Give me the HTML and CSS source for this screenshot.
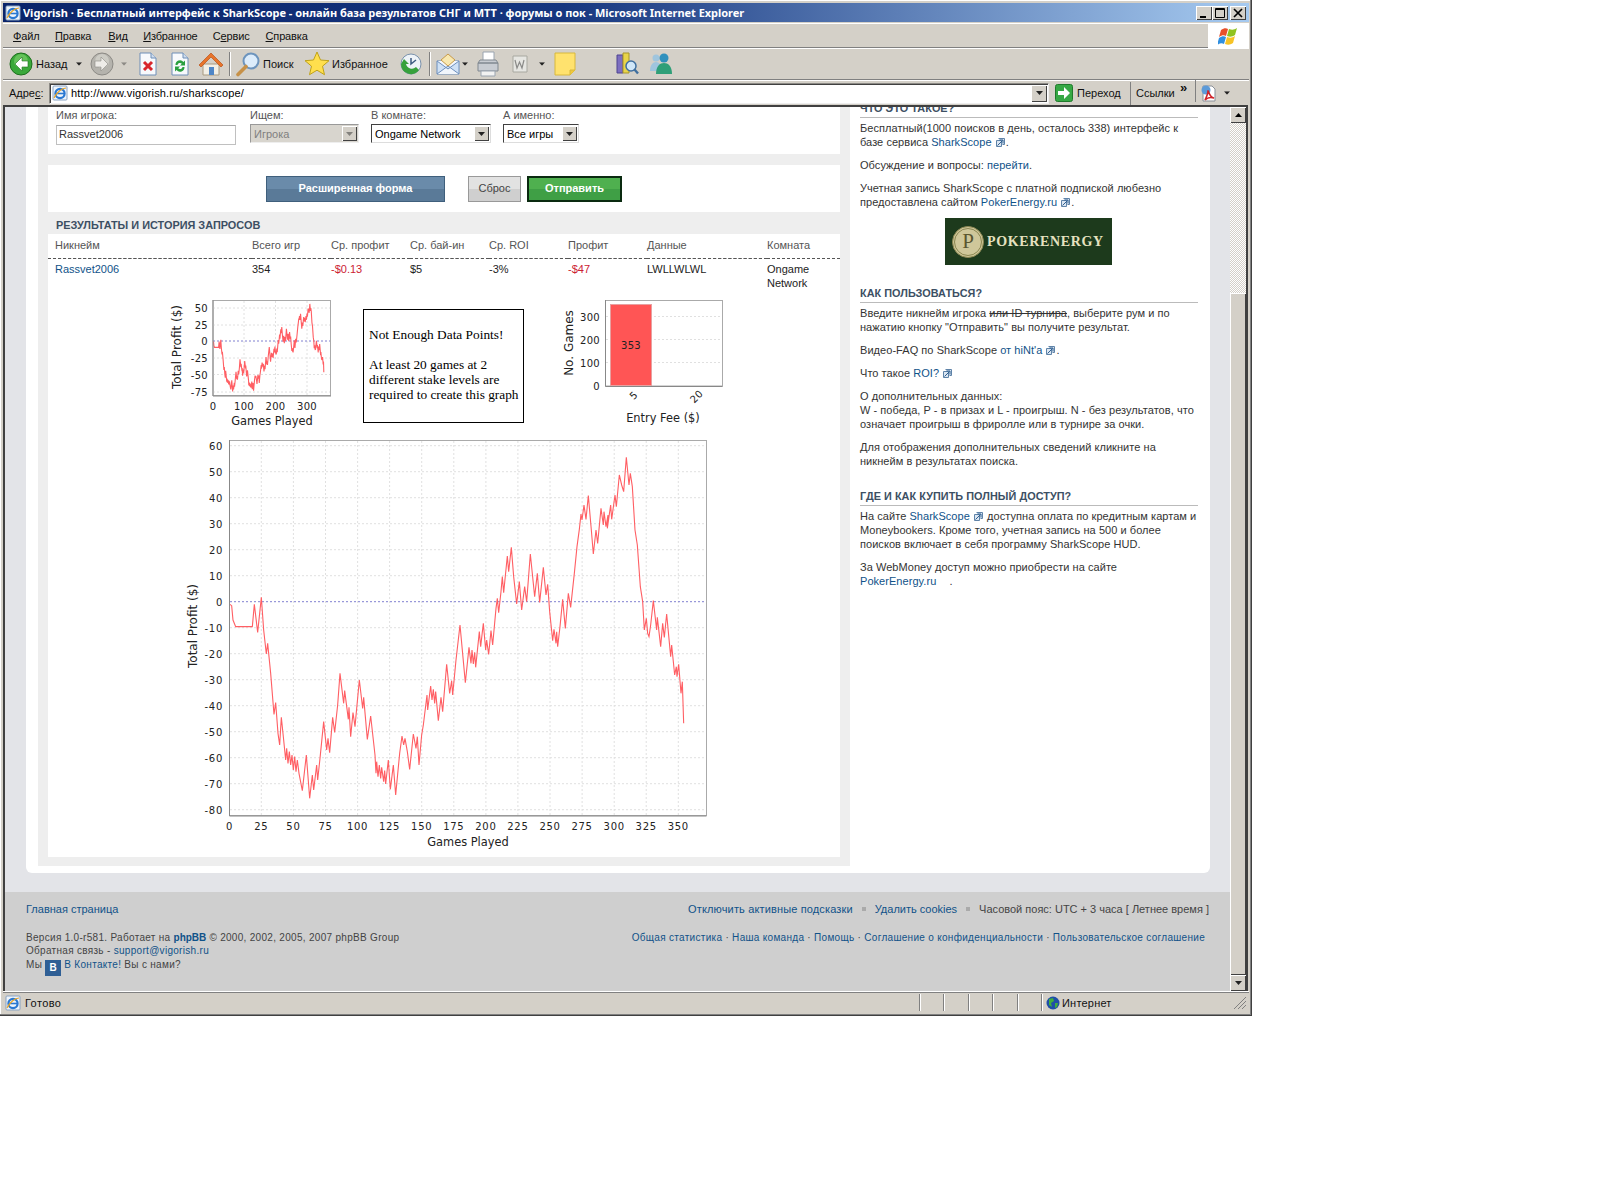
FILE: index.html
```html
<!DOCTYPE html>
<html lang="ru">
<head>
<meta charset="utf-8">
<title>Vigorish</title>
<link rel="stylesheet" href="styles.css">
</head>
<body>
<svg class="defs" width="0" height="0" aria-hidden="true">
  <defs>
    <symbol id="ext" viewBox="0 0 11 11"><path d="M3.5 1.5h6v6h-2M1.5 3.5h5v6h-5z" fill="#dbe6f2" stroke="#5f83a8"/><path d="M2.5 8.5l5-5M4.5 3h3.5v3.5" fill="none" stroke="#2f5f90"/></symbol>
    <symbol id="ie" viewBox="0 0 16 16"><rect x="1" y="1" width="14" height="14" rx="1" fill="#eef4fb" stroke="#8aa3c2"/><circle cx="8" cy="8.5" r="4.6" fill="none" stroke="#2a78d2" stroke-width="2.2"/><path d="M4 8.5h8" stroke="#2a78d2" stroke-width="1.6"/><path d="M2 13C5 7 10 3 14 3" fill="none" stroke="#e8a52b" stroke-width="1.2"/></symbol>
    <symbol id="drop" viewBox="0 0 7 4"><path d="M0 0h7L3.5 4z" fill="#222"/></symbol>
    <polyline id="pl" class="pdata" points="150,523 155,527 159,570 167,590 217,590 223,523 233,607 244,502 251,600 259,672 263,640 272,730 282,853 287,818 294,910 299,945 304,862 311,930 317,990 320,955 324,1000 328,965 332,1005 336,975 340,1020 344,980 348,1025 352,990 357,1030 367,1082 379,975 389,1105 397,1035 401,1080 410,1005 413,1050 420,985 431,875 440,960 444,925 449,968 458,862 464,907 473,825 480,730 491,820 494,782 505,868 507,832 512,920 519,848 525,890 538,750 548,835 551,802 562,928 572,858 585,975 588,1030 590,995 594,1040 598,1005 602,1045 605,1012 611,1055 614,1022 617,1062 625,990 631,1078 640,1005 647,1095 659,970 666,918 671,945 675,925 682,965 689,1018 700,912 708,955 712,920 717,1005 725,915 730,885 741,795 743,840 752,768 756,810 760,778 764,820 767,785 775,872 783,802 788,845 800,703 809,790 815,752 818,795 828,690 840,585 856,758 867,652 873,700 876,660 880,702 884,667 887,712 898,605 902,650 910,580 917,660 920,630 926,673 933,602 938,645 948,535 952,505 956,548 963,485 967,440 971,488 982,378 986,425 994,352 1001,440 1010,522 1018,455 1025,540 1034,470 1040,515 1051,372 1064,500 1072,430 1079,517 1090,412 1098,495 1103,463 1109,545 1118,632 1122,598 1128,640 1130,605 1133,650 1140,590 1148,508 1156,595 1165,490 1172,532 1183,430 1191,350 1198,298 1203,252 1206,270 1212,225 1218,268 1225,197 1234,300 1240,372 1248,300 1253,340 1263,235 1270,285 1272,245 1278,290 1284,255 1282,295 1292,225 1295,268 1305,195 1309,230 1318,135 1325,165 1331,185 1339,82 1347,165 1351,130 1357,170 1365,300 1372,345 1381,470 1388,515 1393,600 1399,565 1403,610 1407,620 1412,585 1420,512 1430,600 1432,562 1442,650 1448,580 1453,622 1460,552 1472,680 1475,645 1484,735 1489,710 1491,740 1496,703 1503,790 1507,755 1511,880"/>
  </defs>
</svg>
<div class="window">
  <header class="titlebar">
    <svg class="ti" viewBox="0 0 16 16"><use href="#ie"/></svg>
    <span class="titletext">Vigorish · Бесплатный интерфейс к SharkScope - онлайн база результатов СНГ и МТТ · форумы о пок - Microsoft Internet Explorer</span>
    <span class="capbtn"><svg viewBox="0 0 14 12"><path d="M3 9h6v2H3z" fill="#000"/></svg></span>
    <span class="capbtn"><svg viewBox="0 0 14 12"><path d="M2.5 1.5h9v9h-9zM2.5 2.5h9" fill="none" stroke="#000"/></svg></span>
    <span class="capbtn close"><svg viewBox="0 0 14 12"><path d="M3 2l8 8M11 2l-8 8" stroke="#000" stroke-width="1.7"/></svg></span>
  </header>
  <nav class="menubar">
    <span class="mi m1"><u>Ф</u>айл</span>
    <span class="mi m2"><u>П</u>равка</span>
    <span class="mi m3"><u>В</u>ид</span>
    <span class="mi m4"><u>И</u>збранное</span>
    <span class="mi m5">С<u>е</u>рвис</span>
    <span class="mi m6"><u>С</u>правка</span>
    <span class="flag"><svg viewBox="0 0 22 22" width="22" height="22"><path d="M3 5c3-2 5-2 7-1l-2 7c-2-1-4-1-7 1z" fill="#e8502a"/><path d="M11 4c3 1 5 1 8-1l-2 7c-3 2-5 2-8 1z" fill="#8fc31f"/><path d="M1 13c3-2 5-2 7-1l-2 7c-2-1-4-1-7 1z" fill="#2f8fe0"/><path d="M9 12c3 1 5 1 8-1l-2 7c-3 2-5 2-8 1z" fill="#f7c325"/></svg></span>
  </nav>
  <div class="toolbar">
    <span class="tb"><svg width="24" height="24" viewBox="0 0 24 24"><circle cx="12" cy="12" r="11" fill="#3aa83a" stroke="#1c6e1c"/><circle cx="12" cy="9" r="7" fill="#8fdc7a" opacity=".5"/><path d="M13 5l-7 7 7 7v-4h6V9h-6z" fill="#fff" stroke="#1c6e1c" stroke-width=".6"/></svg></span>
    <span class="tlabel">Назад</span>
    <span class="tb"><svg class="dd" viewBox="0 0 7 4"><use href="#drop"/></svg></span>
    <span class="tb"><svg width="24" height="24" viewBox="0 0 24 24"><circle cx="12" cy="12" r="11" fill="#b5b3ad" stroke="#8c8a85"/><circle cx="12" cy="9" r="7" fill="#dedcd6" opacity=".6"/><path d="M11 5l7 7-7 7v-4H5V9h6z" fill="#eeece8" stroke="#8c8a85" stroke-width=".6"/></svg></span>
    <span class="tb"><svg class="dd dim" viewBox="0 0 7 4"><use href="#drop"/></svg></span>
    <span class="tb"><svg width="20" height="24" viewBox="0 0 20 24"><path d="M2 1h11l5 5v17H2z" fill="#f7f9fc" stroke="#6f8fb8"/><path d="M13 1v5h5" fill="#cfdcec" stroke="#6f8fb8"/><path d="M6 10l8 8M14 10l-8 8" stroke="#d8262c" stroke-width="3"/></svg></span>
    <span class="tb"><svg width="20" height="24" viewBox="0 0 20 24"><path d="M2 1h11l5 5v17H2z" fill="#f7f9fc" stroke="#6f8fb8"/><path d="M13 1v5h5" fill="#cfdcec" stroke="#6f8fb8"/><path d="M5.500 13a4.500 4.500 0 0 1 8-3l1.500-1.500v5h-5l1.800-1.800a2.500 2.500 0 0 0-4.300 1.300zM14.500 15a4.500 4.500 0 0 1-8 3L5 19.500v-5h5l-1.800 1.800a2.500 2.500 0 0 0 4.300-1.300z" fill="#2aa040"/></svg></span>
    <span class="tb"><svg width="26" height="26" viewBox="0 0 26 26"><path d="M5 13v11h16V13z" fill="#f2efe6" stroke="#a89a80"/><path d="M13 2L1 14l2 2L13 6l10 10 2-2z" fill="#e8742a" stroke="#b8501a" stroke-width=".7"/><rect x="11" y="16" width="5" height="8" fill="#4f86c6"/></svg></span>
    <span class="tsep"></span>
    <span class="tb"><svg width="26" height="26" viewBox="0 0 26 26"><circle cx="16" cy="10" r="7.500" fill="#dcecfb" stroke="#6d94bd" stroke-width="2"/><path d="M11 15.500L3 23.500" stroke="#c79148" stroke-width="3.600" stroke-linecap="round"/></svg></span>
    <span class="tlabel l2">Поиск</span>
    <span class="tb"><svg width="26" height="26" viewBox="0 0 26 26"><path d="M13 1l3.500 8 8.500.7-6.500 5.500 2 8.500-7.500-4.500-7.500 4.500 2-8.500L1 9.700 9.500 9z" fill="#ffdf4d" stroke="#bfa21a"/></svg></span>
    <span class="tlabel l3">Избранное</span>
    <span class="tb"><svg width="26" height="26" viewBox="0 0 26 26"><circle cx="13" cy="13" r="10" fill="#eef3f8" stroke="#7a92ad"/><path d="M3 13a10 10 0 0 0 18 6l-3-3a6 6 0 0 1-10-3H11L6 8z" fill="#37a13c"/><path d="M13 7v6l5-4" fill="none" stroke="#3c5a80" stroke-width="1.500"/></svg></span>
    <span class="tsep"></span>
    <span class="tb"><svg width="24" height="22" viewBox="0 0 24 22"><path d="M1 8h22v13H1z" fill="#cfe1f5" stroke="#6d8fbd"/><path d="M1 21l11-8 11 8M1 8l11 8 11-8" fill="#f1f6fc" stroke="#6d8fbd"/><path d="M5 7l7-6 7 6-7 6z" fill="#f8e8b0" stroke="#c79a4a"/></svg></span>
    <span class="tb"><svg class="dd" viewBox="0 0 7 4"><use href="#drop"/></svg></span>
    <span class="tb"><svg width="24" height="26" viewBox="0 0 24 26"><path d="M7 1h11v11H7z" fill="#fff" stroke="#9aa4b0"/><path d="M2 12h20l-2-3H4zM2 12v8h20v-8z" fill="#c8ccd2" stroke="#808890"/><path d="M5 20h14v5H5z" fill="#f2f2f2" stroke="#9aa4b0"/></svg></span>
    <span class="tb"><svg width="16" height="18" viewBox="0 0 16 18"><path d="M1 1h14v16H1z" fill="#e6e6e2" stroke="#a8a8a0"/><path d="M3 5l2 8 2.500-6 2.500 6 2-8" fill="none" stroke="#8a8a88" stroke-width="1.200"/></svg></span>
    <span class="tb"><svg class="dd" viewBox="0 0 7 4"><use href="#drop"/></svg></span>
    <span class="tb"><svg width="22" height="24" viewBox="0 0 22 24"><path d="M1 1h20v17l-5 5H1z" fill="#ffe26e" stroke="#d8b83c"/><path d="M16 23v-5h5" fill="#f0c83c" stroke="#d8b83c"/></svg></span>
    <span></span>
    <span class="tb"><svg width="24" height="26" viewBox="0 0 24 26"><path d="M2 4h6v18H2z" fill="#7d6fc0" stroke="#4f4590"/><path d="M8 2h6v20H8z" fill="#e8d44a" stroke="#a8962a"/><circle cx="16" cy="15" r="5" fill="#cfe6f8" stroke="#3f6f9f" stroke-width="1.500"/><path d="M19.500 18.500l3.500 4" stroke="#3f6f9f" stroke-width="2.400"/></svg></span>
    <span class="tb"><svg width="26" height="24" viewBox="0 0 26 24"><circle cx="8" cy="6" r="3.500" fill="#9fc5de"/><path d="M2 19c0-6 3-9 6-9s6 3 6 9z" fill="#9fc5de"/><circle cx="16" cy="6" r="4.500" fill="#2f90bd"/><path d="M8 22c0-8 4-11 8-11s8 3 8 11z" fill="#2f9f78"/></svg></span>
  </div>
  <div class="addrbar">
    <span class="addrlabel">Адре<u>с</u>:</span>
    <div class="addrbox">
      <svg class="aico" viewBox="0 0 16 16"><use href="#ie"/></svg>
      <span class="url">http://www.vigorish.ru/sharkscope/</span>
      <span class="arrowbtn"><svg viewBox="0 0 7 4"><use href="#drop"/></svg></span>
    </div>
    <span class="go"><svg width="18" height="18" viewBox="0 0 18 18"><rect x=".5" y=".5" width="17" height="17" rx="2" fill="#36a844" stroke="#1f7a2c"/><path d="M9 3l6 6-6 6v-4H3V7h6z" fill="#fff"/></svg></span>
    <span class="golabel">Переход</span>
    <span class="links">Ссылки</span>
    <span class="chev">»</span>
    <span class="pdf"><svg width="18" height="18" viewBox="0 0 18 18"><path d="M3 2h9l3 3v12H3z" fill="#fff" stroke="#8a9099"/><circle cx="6" cy="6" r="4.500" fill="#5c9ad8"/><path d="M5 16c2-4 3-8 3-9s2 7 6 7c-3-1-7 0-9 2z" fill="none" stroke="#d0242a" stroke-width="1.600"/></svg></span>
    <svg class="dd pdfdd" viewBox="0 0 7 4"><use href="#drop"/></svg>
  </div>

  <div class="client">
    <div class="viewport">
      <div class="page">
        <div class="wrap">
          <main class="col">
            <section class="panel p-form">
              <label class="fld f1"><span>Имя игрока:</span><span class="input">Rassvet2006</span></label>
              <label class="fld f2"><span>Ищем:</span><span class="combo off">Игрока<i class="cbtn"><svg viewBox="0 0 7 4"><use href="#drop"/></svg></i></span></label>
              <label class="fld f3"><span>В комнате:</span><span class="combo">Ongame Network<i class="cbtn"><svg viewBox="0 0 7 4"><use href="#drop"/></svg></i></span></label>
              <label class="fld f4"><span>А именно:</span><span class="combo">Все игры<i class="cbtn"><svg viewBox="0 0 7 4"><use href="#drop"/></svg></i></span></label>
            </section>
            <section class="panel p-btns">
              <button class="btn adv">Расширенная форма</button>
              <button class="btn reset">Сброс</button>
              <button class="btn send">Отправить</button>
            </section>
            <h2 class="rhead">РЕЗУЛЬТАТЫ И ИСТОРИЯ ЗАПРОСОВ</h2>
            <section class="panel p-res">
              <table class="res">
                <colgroup><col class="c1"><col class="c2"><col class="c2"><col class="c2"><col class="c2"><col class="c2"><col class="c3"><col class="c4"></colgroup>
                <thead><tr><th>Никнейм</th><th>Всего игр</th><th>Ср. профит</th><th>Ср. бай-ин</th><th>Ср. ROI</th><th>Профит</th><th>Данные</th><th>Комната</th></tr></thead>
                <tbody><tr><td><a href="#">Rassvet2006</a></td><td>354</td><td class="neg">-$0.13</td><td>$5</td><td>-3%</td><td class="neg">-$47</td><td>LWLLWLWL</td><td>Ongame Network</td></tr></tbody>
              </table>
              <div class="minis">
                <svg class="c-left" width="190" height="134" viewBox="160 296 190 134">
                  <rect x="213" y="300.500" width="117.500" height="95" fill="#fff" stroke="#aaa"/>
                  <g class="grid"><path d="M213 308h117M213 325h117M213 358h117M213 374.500h117M213 392h117M244 301v94M275.500 301v94M307 301v94"/></g>
                  <path d="M213 341h117" class="zero"/>
                  <use href="#pl" transform="translate(200.970 296.900) scale(.0813 .0856)"/>
                  <path d="M213 300v96h118" fill="none" stroke="#888"/>
                  <g class="tk tk-r"><text x="208" y="312">50</text><text x="208" y="329">25</text><text x="208" y="345">0</text><text x="208" y="362">-25</text><text x="208" y="379">-50</text><text x="208" y="396">-75</text></g>
                  <g class="tk tk-m"><text x="213" y="410">0</text><text x="244" y="410">100</text><text x="275.500" y="410">200</text><text x="307" y="410">300</text></g>
                  <text class="axt axh" x="272" y="425">Games Played</text>
                  <text class="axt" transform="translate(181 347) rotate(-90)">Total Profit ($)</text>
                </svg>
                <div class="note">
                  <p>Not Enough Data Points!</p>
                  <p>At least 20 games at 2 different stake levels are required to create this graph</p>
                </div>
                <svg class="c-right" width="180" height="134" viewBox="555 296 180 134">
                  <rect x="605.500" y="300.500" width="117" height="85.500" fill="#fff" stroke="#aaa"/>
                  <g class="grid"><path d="M606 316.500h116M606 339.500h116M606 362.500h116"/></g>
                  <rect x="610.500" y="304.500" width="41" height="81" fill="#ff5555" stroke="#e8a0a0"/>
                  <path d="M605.500 300v86.500h117" fill="none" stroke="#888"/>
                  <text class="tk tk-m" x="631" y="349">353</text>
                  <g class="tk tk-r"><text x="600" y="320.500">300</text><text x="600" y="343.500">200</text><text x="600" y="366.500">100</text><text x="600" y="390">0</text></g>
                  <text class="tk tk-m" transform="translate(636 398) rotate(-45)">5</text>
                  <text class="tk tk-m" transform="translate(699 399) rotate(-45)">20</text>
                  <text class="axt axh" x="663" y="422">Entry Fee ($)</text>
                  <text class="axt" transform="translate(573 343) rotate(-90)">No. Games</text>
                </svg>
              </div>
              <svg class="c-main" width="540" height="425" viewBox="180 430 540 425">
                <rect x="229.500" y="440.500" width="477" height="375" fill="#fff" stroke="#aaa"/>
                <g class="grid"><path d="M230 445.700h476M230 471.700h476M230 497.700h476M230 523.700h476M230 549.700h476M230 575.700h476M230 627.700h476M230 653.700h476M230 679.700h476M230 705.700h476M230 731.700h476M230 757.700h476M230 783.700h476M230 809.700h476"/><path d="M261.300 441v374M293.400 441v374M325.500 441v374M357.600 441v374M389.600 441v374M421.700 441v374M453.800 441v374M485.900 441v374M517.900 441v374M550 441v374M582.100 441v374M614.200 441v374M646.200 441v374M678.300 441v374"/></g>
                <path d="M230 601.700h476" class="zero"/>
                <use href="#pl" transform="translate(180 430) scale(.33333)"/>
                <path d="M229.500 440v376h477" fill="none" stroke="#888"/>
                <g class="tk tk-r tk-l"><text x="223" y="450">60</text><text x="223" y="476">50</text><text x="223" y="502">40</text><text x="223" y="528">30</text><text x="223" y="554">20</text><text x="223" y="580">10</text><text x="223" y="606">0</text><text x="223" y="632">-10</text><text x="223" y="658">-20</text><text x="223" y="684">-30</text><text x="223" y="710">-40</text><text x="223" y="736">-50</text><text x="223" y="762">-60</text><text x="223" y="788">-70</text><text x="223" y="814">-80</text></g>
                <g class="tk tk-m tk-l"><text x="229.500" y="830">0</text><text x="261.300" y="830">25</text><text x="293.400" y="830">50</text><text x="325.500" y="830">75</text><text x="357.600" y="830">100</text><text x="389.600" y="830">125</text><text x="421.700" y="830">150</text><text x="453.800" y="830">175</text><text x="485.900" y="830">200</text><text x="517.900" y="830">225</text><text x="550" y="830">250</text><text x="582.100" y="830">275</text><text x="614.200" y="830">300</text><text x="646.200" y="830">325</text><text x="678.300" y="830">350</text></g>
                <text class="axt axh" x="468" y="846">Games Played</text>
                <text class="axt" transform="translate(197 626) rotate(-90)">Total Profit ($)</text>
              </svg>
            </section>
          </main>
          <aside class="side">
            <h3>ЧТО ЭТО ТАКОЕ?</h3>
            <p>Бесплатный(1000 поисков в день, осталось 338) интерфейс к базе сервиса <a href="#">SharkScope</a> <svg class="ex"><use href="#ext"/></svg>.</p>
            <p>Обсуждение и вопросы: <a href="#">перейти</a>.</p>
            <p>Учетная запись SharkScope с платной подпиской любезно предоставлена сайтом <a href="#">PokerEnergy.ru</a> <svg class="ex"><use href="#ext"/></svg>.</p>
            <div class="logo"><span class="coin"><span class="coinp">P</span></span><span class="logot">POKERENERGY</span></div>
            <h3>КАК ПОЛЬЗОВАТЬСЯ?</h3>
            <p>Введите никнейм игрока <s>или ID турнира</s>, выберите рум и по нажатию кнопку "Отправить" вы получите результат.</p>
            <p>Видео-FAQ по SharkScope <a href="#">от hiNt'a</a> <svg class="ex"><use href="#ext"/></svg>.</p>
            <p>Что такое <a href="#">ROI?</a> <svg class="ex"><use href="#ext"/></svg></p>
            <p>О дополнительных данных:<br>W - победа, P - в призах и L - проигрыш. N - без результатов, что означает проигрыш в фриролле или в турнире за очки.</p>
            <p>Для отображения дополнительных сведений кликните на никнейм в результатах поиска.</p>
            <h3>ГДЕ И КАК КУПИТЬ ПОЛНЫЙ ДОСТУП?</h3>
            <p>На сайте <a href="#">SharkScope</a> <svg class="ex"><use href="#ext"/></svg> доступна оплата по кредитным картам и Moneybookers. Кроме того, учетная запись на 500 и более поисков включает в себя программу SharkScope HUD.</p>
            <p>За WebMoney доступ можно приобрести на сайте<br><a href="#">PokerEnergy.ru</a> <span class="blank"></span>.</p>
          </aside>
        </div>
        <footer class="foot">
          <div class="frow">
            <a href="#">Главная страница</a>
            <span class="fr"><a href="#" class="wide">Отключить активные подсказки</a><i class="bul"></i><a href="#">Удалить cookies</a><i class="bul"></i>Часовой пояс: UTC + 3 часа [ Летнее время ]</span>
          </div>
          <div class="frow small">
            <div>Версия 1.0-r581. Работает на <a href="#" class="b">phpBB</a> © 2000, 2002, 2005, 2007 phpBB Group<br>Обратная связь - <a href="#">support@vigorish.ru</a><br>Мы <span class="vk">B</span> <a href="#">В Контакте!</a> Вы с нами?</div>
            <div class="frs"><a href="#">Общая статистика</a> · <a href="#">Наша команда</a> · <a href="#">Помощь</a> · <a href="#">Соглашение о конфиденциальности</a> · <a href="#">Пользовательское соглашение</a></div>
          </div>
        </footer>
      </div>
    </div>
    <div class="scrollbar">
      <span class="sbtn"><svg viewBox="0 0 7 4"><path d="M0 4h7L3.500 0z" fill="#000"/></svg></span>
      <span class="strack"></span>
      <span class="sthumb"></span>
      <span class="sbtn"><svg viewBox="0 0 7 4"><use href="#drop"/></svg></span>
    </div>
  </div>

  <footer class="status">
    <svg class="sico" viewBox="0 0 16 16"><use href="#ie"/></svg>
    <span class="stext">Готово</span>
    <span class="cell"></span><span class="cell"></span><span class="cell"></span><span class="cell"></span><span class="cell"></span>
    <span class="zone"><svg width="14" height="14" viewBox="0 0 14 14"><circle cx="7" cy="7" r="6.500" fill="#1f4fa8"/><path d="M3 3l4-1 1 3-3 2 1 4-3-2zM9 7l3 0-1 4-2 1z" fill="#3fae3f"/></svg>Интернет</span>
    <span class="grip"><svg width="15" height="15" viewBox="0 0 15 15"><path d="M14 2L2 14M14 6L6 14M14 10l-4 4" stroke="#808080" fill="none"/></svg></span>
  </footer>
</div>
</body>
</html>
```
FILE: styles.css
```css
* { box-sizing: border-box; }
html, body { margin: 0; padding: 0; background: #fff; }
body { font: 11px/14px "Liberation Sans", Arial, sans-serif; color: #333; }
.defs { position: absolute; }
a { color: #105289; text-decoration: none; }
p { margin: 0; }

.window {
  width: 1252px; height: 1016px; padding: 3px 3px 4px;
  background: #d4d0c8; color: #111;
  box-shadow: inset -1px -1px 0 #404040, inset -2px -2px 0 #808080, inset 1px 1px 0 #fff;
  display: flex; flex-direction: column;
}

.titlebar {
  height: 19px; flex: none; margin-bottom: 1px; display: flex; align-items: center; padding: 0 3px 0 2px;
  background: linear-gradient(90deg, #0a246a 0, #16367f 45%, #a6caf0 100%);
}
.ti { width: 16px; height: 16px; flex: none; margin-right: 2px; }
.titletext { flex: 1; color: #fff; font: bold 11px/19px "Noto Sans", sans-serif; letter-spacing: -.03px; white-space: nowrap; overflow: hidden; }
.capbtn {
  width: 16px; height: 14px; background: #d4d0c8; display: flex;
  box-shadow: inset 1px 1px 0 #fff, inset -1px -1px 0 #404040;
}
.capbtn svg { width: 14px; height: 12px; margin: 1px; }
.capbtn.close { margin-left: 2px; }

.menubar { height: 25px; flex: none; position: relative; display: flex; align-items: center; border-top: 1px solid #fff; border-bottom: 1px solid #808080; }
.mi { display: block; letter-spacing: -.15px; }
.mi u { text-decoration: underline; }
.m1 { margin-left: 10px; } .m2 { margin-left: 15.600px; } .m3 { margin-left: 16.900px; } .m4 { margin-left: 15.500px; } .m5 { margin-left: 15.200px; } .m6 { margin-left: 16px; }
.flag { margin-left: auto; width: 41px; height: 24px; background: #fff; display: flex; align-items: center; justify-content: center; }

.toolbar {
  height: 32px; flex: none; padding-left: 5px; border-top: 1px solid #fff; border-bottom: 1px solid #808080;
  display: grid; align-items: center;
  grid-template-columns: 25px 39px 14px 32px 12px 36px 28px 34px 4px 31px 40px 28px 66px 28px 10px 26px 8px 38px 26px 18px 28px 30px 36px 32px;
}
.tb { display: flex; align-items: center; justify-content: center; }
.tlabel { padding-left: 3px; }
.l2 { margin-left: -3px; }
.l3 { margin-left: -2px; }
.tsep { width: 2px; height: 24px; justify-self: center; border-left: 1px solid #808080; border-right: 1px solid #fff; }
.dd { width: 6px; height: 4px; }
.dim { opacity: .4; }

.addrbar { height: 25px; flex: none; display: flex; align-items: center; border-top: 1px solid #fff; position: relative; }
.addrlabel { margin-left: 6px; width: 40px; }
.addrbox {
  width: 1000px; height: 21px; background: #fff; display: flex; align-items: center;
  border: 1px solid #8c8a85; border-right-color: #eee; border-bottom-color: #eee; box-shadow: inset 1px 1px 0 #404040;
}
.aico { width: 16px; height: 16px; margin-left: 2px; }
.url { margin-left: 3px; flex: 1; color: #000; letter-spacing: .18px; }
.arrowbtn { width: 16px; height: 17px; background: #d4d0c8; margin-right: 1px; display: flex; align-items: center; justify-content: center; box-shadow: inset 1px 1px 0 #fff, inset -1px -1px 0 #404040; }
.arrowbtn svg { width: 7px; height: 4px; }
.go { margin-left: 6px; display: flex; }
.golabel { margin-left: 4px; width: 54px; border-right: 1px solid #808080; height: 23px; line-height: 23px; }
.links { margin-left: 5px; width: 44px; }
.chev { font-weight: bold; font-size: 13px; width: 16px; margin-top: -5px; border-right: 1px solid #808080; height: 23px; line-height: 18px; }
.pdf { margin-left: 4px; display: flex; }
.pdfdd { margin-left: 6px; }

.client { flex: 1; min-height: 0; display: flex; margin-right: 1px; border-top: 2px solid #404040; border-left: 2px solid #404040; border-right: 2px solid #404040; }
.viewport { flex: 1; min-width: 0; overflow: hidden; background: #e3e4e8; }
.page { margin-top: -20px; padding-left: 21px; }
.scrollbar { width: 16px; flex: none; display: flex; flex-direction: column; }
.sbtn { height: 16px; flex: none; background: #d4d0c8; display: flex; align-items: center; justify-content: center; box-shadow: inset 1px 1px 0 #fff, inset -1px -1px 0 #404040; }
.sbtn svg { width: 7px; height: 4px; }
.strack { height: 170px; flex: none; background: repeating-conic-gradient(#fff 0 25%, #d4d0c8 0 50%) 0 0 / 2px 2px; }
.sthumb { flex: 1; background: #d4d0c8; box-shadow: inset 1px 1px 0 #fff, inset -1px -1px 0 #404040; }

.wrap { width: 1184px; background: #fff; border-radius: 0 0 6px 6px; display: flex; padding-bottom: 7px; margin-bottom: 19px; }
.col { width: 824px; padding: 0 10px 9px 22px; background: linear-gradient(90deg, #fff 12px, #eee 12px); }
.panel { background: #fff; }
.p-form { height: 67px; padding: 21px 0 0 8px; display: flex; }
.fld { display: flex; flex-direction: column; color: #555; }
.f1 { width: 194px; } .f2 { width: 121px; } .f3 { width: 132px; }
.input { width: 180px; height: 20px; margin-top: 3px; background: #fff; border: 1px solid #c0c0c0; border-top-color: #a8a8a8; color: #333; line-height: 17px; padding-left: 2px; }
.combo {
  height: 19px; margin-top: 2px; background: #fff; display: flex; align-items: center; justify-content: space-between; color: #000;
  padding-left: 3px; border: 1px solid #808080; border-top-color: #404040; border-left-color: #404040; border-right-color: #ddd; border-bottom-color: #ddd;
}
.f2 .combo { width: 109px; } .f3 .combo { width: 120px; } .f4 .combo { width: 76px; }
.combo.off { color: #808080; background: #d8d5ce; border-color: #999 #eee #eee #999; }
.cbtn { width: 15px; height: 15px; margin-right: 1px; background: #d4d0c8; display: flex; align-items: center; justify-content: center; box-shadow: inset 1px 1px 0 #fff, inset -1px -1px 0 #404040; }
.cbtn svg { width: 7px; height: 4px; }
.off .cbtn svg { opacity: .45; }

.p-btns { margin-top: 11px; height: 47px; padding: 11px 0 0 218px; display: flex; align-items: flex-start; }
.btn { height: 26px; padding: 0 0 2px; font: bold 11px/14px "Liberation Sans", sans-serif; }
.adv { width: 179px; color: #fff; border: 1px solid #3f5f7c; background: linear-gradient(#6a8baa 0 50%, #5a7a98 50% 100%); }
.reset { width: 53px; margin-left: 23px; font-weight: normal; color: #444; border: 1px solid #999; background: linear-gradient(#e2e2e2 0 50%, #cfcfcf 50% 100%); }
.send { width: 95px; margin-left: 6px; color: #fff; border: 2px solid #0a2a10; background: linear-gradient(#4fb04f 0 50%, #3f9f45 50% 100%); }

.rhead { margin: 0; height: 22px; padding: 6px 0 0 8px; font: bold 10.900px/14px "Liberation Sans", sans-serif; color: #3c4f63; }
.p-res { height: 623px; }
.res { width: 792px; table-layout: fixed; border-collapse: collapse; }
.c1 { width: 204px; } .c2 { width: 79px; } .c3 { width: 120px; } .c4 { width: 73px; }
.res th { height: 24px; padding: 0 0 2px; font-weight: normal; text-align: left; color: #555; border-bottom: 1px dashed #555; }
.res td { padding: 3px 0 6px; vertical-align: top; color: #222; }
.res th:first-child, .res td:first-child { padding-left: 7px; }
.neg { color: #cc2233 !important; }

.minis { display: flex; align-items: flex-start; height: 134px; margin-left: 112px; }
.note { width: 161px; height: 114px; margin: 13px 0 0 13px; padding: 17px 3px 0 5px; border: 1px solid #000; font: 13.330px/15px "Liberation Serif", serif; color: #000; }
.note p + p { margin-top: 15px; }
.c-right { margin-left: 31px; }
.c-main { display: block; margin: 0 0 0 132px; }

.grid path { stroke: #e0e0e0; stroke-dasharray: 2 2; fill: none; }
.zero { stroke: #8080d0; stroke-dasharray: 2 2; fill: none; }
.pdata { fill: none; stroke: #ff5f64; stroke-width: 1.100; vector-effect: non-scaling-stroke; }
.tk { font: 10px "DejaVu Sans", sans-serif; fill: #222; letter-spacing: .3px; }
.tk-r { text-anchor: end; }
.tk-m { text-anchor: middle; }
.tk-l { font-size: 10px; letter-spacing: .7px; }
.axt { font: 12px "DejaVu Sans", sans-serif; fill: #222; text-anchor: middle; }
.axh { font-size: 11.400px; }

.side { width: 338px; margin-left: 10px; padding-top: 14px; letter-spacing: .05px; }
.side h3 { margin: 21px 0 0; height: 17px; font: bold 10.850px/14px "Liberation Sans", sans-serif; color: #3c4f63; border-bottom: 1px solid #bbb; }
.side h3:first-child { margin-top: 0; }
.side h3 + p { margin-top: 3px; }
.side p { margin-top: 9px; color: #333; }
.side s { color: #333; }
.ex { width: 11px; height: 11px; vertical-align: -2px; }
.blank { display: inline-block; width: 10px; }
.logo { width: 167px; height: 47px; margin: 9px 0 0 85px; background: #1d3a1c; display: flex; align-items: center; padding-left: 7px; }
.coin { width: 32px; height: 32px; border-radius: 50%; background: #cfc79a; border: 3px double #8a8650; display: flex; align-items: center; justify-content: center; flex: none; }
.coinp { font: 21px/1 "Liberation Serif", serif; color: #5a5630; }
.logot { margin-left: 3px; font: bold 14px/1 "Liberation Serif", serif; letter-spacing: .65px; color: #e6e2c0; white-space: nowrap; }

.foot { margin-left: -21px; padding: 10px 21px 0; height: 99px; background: #cfcfcf; color: #444; }
.frow { display: flex; justify-content: space-between; }
.wide { letter-spacing: .14px; }
.bul { display: inline-block; width: 4px; height: 4px; background: #aaa; margin: 0 9px; vertical-align: 2px; }
.small { margin-top: 15px; font-size: 10px; line-height: 13.300px; letter-spacing: .3px; }
.b { font-weight: bold; letter-spacing: 0; }
.frs { margin-right: 4px; }
.vk { display: inline-block; width: 16px; height: 16px; margin: -2px 0; background: #2f5f95; color: #fff; font: bold 10px/16px "Liberation Sans", sans-serif; text-align: center; vertical-align: -3px; letter-spacing: 0; }

.status { height: 21px; flex: none; display: flex; align-items: center; padding-top: 1px; border-top: 1px solid #fff; box-shadow: inset 0 1px 0 #808080; position: relative; }
.sico { width: 16px; height: 16px; margin-left: 2px; }
.stext { margin-left: 4px; flex: 1; letter-spacing: .4px; }
.cell { width: 24.400px; height: 17px; border-left: 1px solid #808080; box-shadow: inset 1px 0 0 #fff; }
.zone { width: 191px; height: 17px; border-left: 1px solid #808080; display: flex; align-items: center; gap: 2px; padding-left: 4px; letter-spacing: .2px; box-shadow: inset 1px 0 0 #fff; }
.grip { width: 15px; height: 15px; display: flex; margin-right: 2px; }
```
